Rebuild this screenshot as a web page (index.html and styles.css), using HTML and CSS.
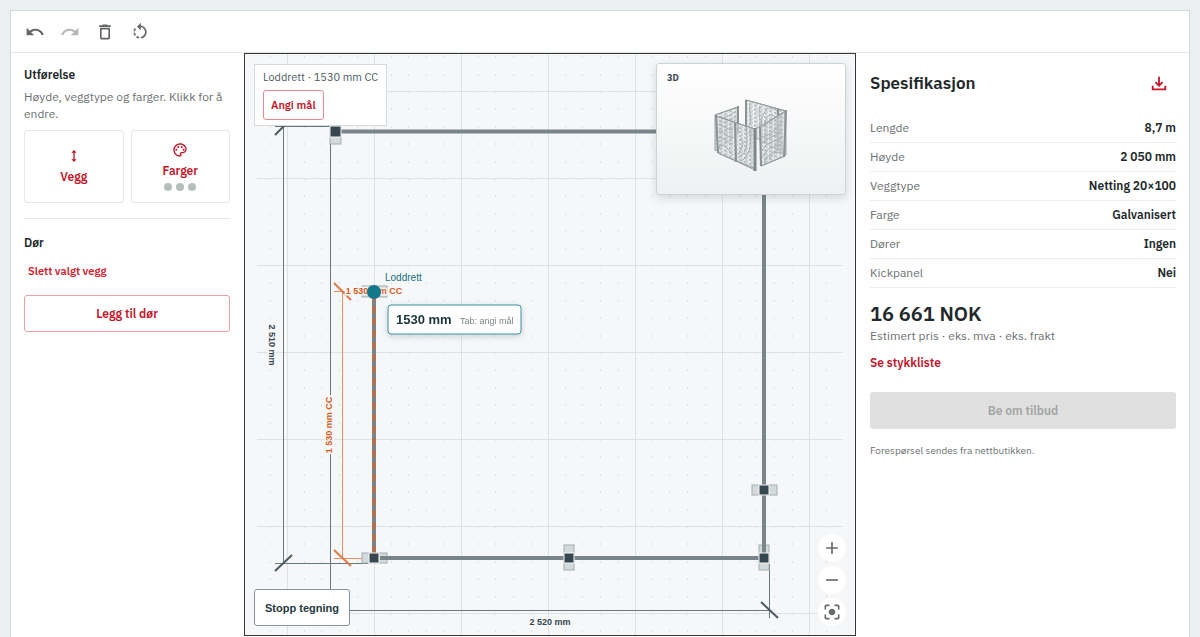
FILE: index.html
```html
<!DOCTYPE html>
<html lang="nb">
<head>
<meta charset="utf-8">
<meta name="viewport" content="width=device-width, initial-scale=1">
<title>Spesifikasjon</title>
<link rel="stylesheet" href="styles.css">
</head>
<body>
<div class="shell">
  <header class="toolbar">
    <button class="tool" type="button" aria-label="Angre"><svg viewBox="0 0 24 24"><path d="M12.500 8c-2.650 0-5.050.99-6.900 2.600L2 7v9h9l-3.620-3.620c1.390-1.160 3.160-1.880 5.120-1.880 3.540 0 6.550 2.310 7.600 5.500l2.370-.78C21.080 11.030 17.150 8 12.500 8z"/></svg></button>
    <button class="tool" type="button" aria-label="Gjenta" disabled><svg viewBox="0 0 24 24"><path d="M18.400 10.600C16.550 8.990 14.150 8 11.500 8c-4.650 0-8.580 3.030-9.960 7.220L3.900 16c1.050-3.190 4.050-5.500 7.600-5.500 1.950 0 3.730.72 5.120 1.880L13 16h9V7l-3.600 3.600z"/></svg></button>
    <button class="tool" type="button" aria-label="Slett"><svg viewBox="0 0 24 24"><path d="M6 19c0 1.100.9 2 2 2h8c1.100 0 2-.9 2-2V7H6v12zM8 9h8v10H8V9zm7.500-5-1-1h-5l-1 1H5v2h14V4h-3.500z"/></svg></button>
    <button class="tool" type="button" aria-label="Nullstill"><svg viewBox="0 0 24 24"><path d="M7.110 8.530 5.700 7.110C4.800 8.270 4.240 9.610 4.070 11h2.020c.14-.87.49-1.720 1.020-2.470zM6.090 13H4.070c.17 1.390.72 2.730 1.620 3.890l1.410-1.420c-.52-.75-.87-1.590-1.010-2.470zm1.010 5.320c1.160.9 2.510 1.440 3.900 1.610V17.900c-.87-.15-1.710-.49-2.460-1.030L7.100 18.320zM13 4.070V1L8.450 5.550 13 10V6.090c2.840.48 5 2.940 5 5.910s-2.160 5.430-5 5.910v2.020c3.950-.49 7-3.850 7-7.930s-3.050-7.440-7-7.930z"/></svg></button>
  </header>
  <main class="workspace">
    <aside class="options">
      <section>
        <h2 class="heading">Utførelse</h2>
        <p class="hint">Høyde, veggtype og farger. Klikk for å endre.</p>
        <div class="tiles">
          <button class="tile" type="button"><svg class="tile-icon" viewBox="0 0 24 24"><path d="M13 6.990h3L12 3 8 6.990h3v10.020H8L12 21l4-3.990h-3z"/></svg><span>Vegg</span></button>
          <button class="tile" type="button"><svg class="tile-icon" viewBox="0 0 24 24"><path d="M12 22C6.490 22 2 17.510 2 12S6.490 2 12 2s10 4.040 10 9c0 3.310-2.690 6-6 6h-1.770c-.28 0-.5.22-.5.500 0 .12.050.23.130.33.410.47.640 1.060.640 1.670 0 1.380-1.120 2.500-2.500 2.500zm0-18c-4.410 0-8 3.590-8 8s3.590 8 8 8c.28 0 .5-.22.500-.5 0-.16-.08-.28-.14-.35-.41-.46-.63-1.050-.63-1.650 0-1.380 1.120-2.500 2.500-2.500H16c2.210 0 4-1.790 4-4 0-3.860-3.590-7-8-7z"/><circle cx="6.500" cy="11.500" r="1.500"/><circle cx="9.500" cy="7.500" r="1.500"/><circle cx="14.500" cy="7.500" r="1.500"/><circle cx="17.500" cy="11.500" r="1.500"/></svg><span>Farger</span><span class="swatches"><i></i><i></i><i></i></span></button>
        </div>
      </section>
      <section class="door">
        <h2 class="heading">Dør</h2>
        <button class="text-button" type="button">Slett valgt vegg</button>
        <button class="outline-button" type="button">Legg til dør</button>
      </section>
    </aside>

    <section class="canvas" aria-label="Plantegning">
      <svg class="drawing" viewBox="245 54 610 581">
        <defs>
          <pattern id="dots" x="374" y="91" width="87" height="87" patternUnits="userSpaceOnUse">
            <path class="dot" d="M17 0h1M34 0h1M52 0h1M70 0h1M0 17h1M17 17h1M34 17h1M52 17h1M70 17h1M0 35h1M17 35h1M34 35h1M52 35h1M70 35h1M0 52h1M17 52h1M34 52h1M52 52h1M70 52h1M0 70h1M17 70h1M34 70h1M52 70h1M70 70h1"/>
          </pattern>
        </defs>
        <rect x="257" y="54" width="586" height="581" fill="url(#dots)"/>
        <path class="grid" d="M287.500 54v581M374.500 54v581M461.500 54v581M548.500 54v581M635.500 54v581M722.500 54v581M809.500 54v581M257 91.500h586M257 178.500h586M257 265.500h586M257 352.500h586M257 439.500h586M257 526.500h586M257 613.500h586"/>
        <path class="measure" d="M283.500 126v437M275 126.500h56M275 563.500h93M330.500 138v472M769.500 564v54M330 610.500h440"/>
        <path class="tick" d="M275 135l16-16M275 571l17-16M761 602l17 16"/>
        <path class="measure-active" d="M342.500 291v267M334 291.500h40M334 558.500h32"/>
        <path class="tick-active" d="M334 283l17 17M334 550l17 16"/>
        <g class="panels">
          <rect x="330" y="119" width="11" height="25"/>
          <rect x="362" y="286" width="25" height="11"/>
          <rect x="362" y="553" width="25" height="10"/>
          <rect x="564" y="545" width="10" height="25"/>
          <rect x="759" y="545" width="10" height="25"/>
          <rect x="752" y="485" width="25" height="10"/>
        </g>
        <path class="wall" d="M341 131.500h423V485M764 495v58M759 558H574M564 558H380M374 553V291"/>
        <path class="wall-active" d="M374 553V291"/>
        <g class="posts">
          <rect x="330" y="126" width="11" height="11"/><rect x="369" y="553" width="10" height="10"/><rect x="564" y="553" width="10" height="10"/><rect x="759" y="553" width="10" height="10"/><rect x="759" y="485" width="10" height="10"/>
        </g>
        <text class="dimension" x="550" y="625">2 520 mm</text>
        <text class="dimension" transform="translate(269 345) rotate(90)">2 510 mm</text>
        <text class="dimension active" transform="translate(332 425) rotate(-90)">1 530 mm CC</text>
        <text class="dimension active" x="374" y="294">1 530 mm CC</text>
        <circle class="cursor" cx="374" cy="292" r="7"/>
        <text class="direction" x="385" y="281">Loddrett</text>
        <g class="measure-tip">
          <rect x="388" y="305" width="133" height="29" rx="3"/>
          <text class="tip-value" x="396" y="324">1530 mm</text>
          <text class="tip-help" x="460" y="324">Tab: angi mål</text>
        </g>
      </svg>
      <div class="selection">
        <span>Loddrett · 1530 mm CC</span>
        <button class="measure-button" type="button">Angi mål</button>
      </div>
      <div class="preview">
        <strong class="preview-label">3D</strong>
        <svg class="model" viewBox="0 0 95 90">
          <defs>
            <pattern id="meshLeft" width="5" height="4" patternUnits="userSpaceOnUse" patternTransform="skewY(20)"><path d="M0 1h3M2 3h2M1 0v2"/></pattern>
            <pattern id="meshRight" width="5" height="4" patternUnits="userSpaceOnUse" patternTransform="skewY(-31)"><path d="M0 1h3M2 3h2M1 0v2"/></pattern>
          </defs>
          <path class="mesh-fill" d="M42 10 82 21v44L42 42zM11 25 34 17v27L11 61z"/>
          <path fill="url(#meshLeft)" d="M42 10 82 21v44L42 42z"/>
          <path fill="url(#meshRight)" d="M11 25 34 17v27L11 61z"/>
          <path class="waves" d="M46 14c-2 10 3 14-1 22M56 16c-3 9 2 14-1 20M57 36c1-15 7-20 13-17s7 7 10 10M60 37c2-12 7-15 12-9M15 27c8 1 12-2 17-6M16 33c5-1 10-3 16-6"/>
          <path class="frame" d="M42 10 82 21M11 25 34 17"/>
          <path class="frame-post" d="M42 10v28M74 19v40M34 16v27"/>
          <path class="mesh-front" d="M12 26 51 39v41L14 63zM56 38 81 21v45L57 76z"/>
          <path fill="url(#meshLeft)" d="M12 26 51 39v41L14 63z"/>
          <path fill="url(#meshRight)" d="M56 38 81 21v45L57 76z"/>
          <path class="waves" d="M14 34c6 1 8 7 15 5M14 41c7-1 8 8 15 6M14 48c4-3 9 6 15 6M15 57c5-6 10 4 14 8M34 68c10-5 10-17 8-31M38 71c10-8 9-20 8-32M36 49c7 0 0 12-2 16M58 47c8-2 13-6 21-16M58 54c4-8 14-6 21-15M58 61c5-12 17-8 21-15M59 67c5-13 16-9 20-15M60 72c7-12 15-12 19-14M65 69c6-9 9-6 14-7"/>
          <path class="frame" d="M12 26 51 39 81 22M14 63l38 16M57 76l24-10"/>
          <path class="frame-post" d="M12 25l2 38M31 33l1 39M82 20l-2 47M56 37l1 39"/>
          <path class="frame-corner" d="M51 38v43"/>
        </svg>
      </div>
      <button class="stop-button" type="button">Stopp tegning</button>
      <div class="zoom-controls">
        <button class="zoom-button" type="button" aria-label="Zoom inn"><svg viewBox="0 0 24 24"><path d="M19 13h-6v6h-2v-6H5v-2h6V5h2v6h6z"/></svg></button>
        <button class="zoom-button" type="button" aria-label="Zoom ut"><svg viewBox="0 0 24 24"><path d="M5 11h14v2H5z"/></svg></button>
        <button class="zoom-button" type="button" aria-label="Sentrer"><svg viewBox="0 0 24 24"><path d="M5 15H3v4c0 1.100.9 2 2 2h4v-2H5v-4zM5 5h4V3H5c-1.100 0-2 .9-2 2v4h2V5zm14-2h-4v2h4v4h2V5c0-1.100-.9-2-2-2zm0 16h-4v2h4c1.100 0 2-.9 2-2v-4h-2v4zM12 8c-2.210 0-4 1.790-4 4s1.790 4 4 4 4-1.790 4-4-1.790-4-4-4z"/></svg></button>
      </div>
    </section>

    <aside class="spec">
      <div class="spec-header">
        <h1 class="spec-title">Spesifikasjon</h1>
        <button class="download" type="button" aria-label="Last ned"><svg viewBox="0 0 20 20"><path d="M10 3v9M6 9l4 4 4-4M3 13v4h14v-4"/></svg></button>
      </div>
      <table class="spec-table">
        <tbody>
          <tr><th scope="row">Lengde</th><td>8,7 m</td></tr>
          <tr><th scope="row">Høyde</th><td>2 050 mm</td></tr>
          <tr><th scope="row">Veggtype</th><td>Netting 20×100</td></tr>
          <tr><th scope="row">Farge</th><td>Galvanisert</td></tr>
          <tr><th scope="row">Dører</th><td>Ingen</td></tr>
          <tr><th scope="row">Kickpanel</th><td>Nei</td></tr>
        </tbody>
      </table>
      <p class="price">16 661 NOK</p>
      <p class="price-note">Estimert pris · eks. mva · eks. frakt</p>
      <a class="parts-link" href="#stykkliste">Se stykkliste</a>
      <button class="quote-button" type="button" disabled>Be om tilbud</button>
      <p class="footnote">Forespørsel sendes fra nettbutikken.</p>
    </aside>
  </main>
</div>
</body>
</html>
```
FILE: styles.css
```css
* { box-sizing: border-box; }
body {
  margin: 0;
  background: #ecf0f1;
  color: #222829;
  font: 12px/17px "IBM Plex Sans", "Noto Sans", sans-serif;
}
h1, h2, p { margin: 0; }
button { padding: 0; border: 0; background: none; color: inherit; font: inherit; }
svg { display: block; }

.shell {
  display: flex;
  flex-direction: column;
  min-height: calc(100vh - 10px);
  margin: 10px 10px 0;
  border: 1px solid #d3d8da;
  border-bottom: 0;
  background: #fff;
}
.toolbar {
  display: flex;
  align-items: center;
  gap: 15px;
  height: 42px;
  padding: 0 14px;
  border-bottom: 1px solid #e3e6e7;
}
.tool { width: 20px; height: 20px; fill: #626667; }
.tool:disabled { fill: #b5b8b9; }
.workspace {
  display: grid;
  grid-template-columns: 233px minmax(0, 1fr) 333px;
  flex: 1;
}

.options { padding: 13px 14px 13px 13px; }
.heading { margin-bottom: 5px; font-size: 12px; line-height: 17px; font-weight: 600; }
.hint { color: #6b7071; }
.tiles { display: grid; grid-template-columns: 1fr 1fr; gap: 7px; margin-top: 8px; }
.tile {
  display: flex;
  flex-direction: column;
  align-items: center;
  justify-content: center;
  gap: 4px;
  height: 73px;
  border: 1px solid #e5e7e8;
  border-radius: 3px;
  color: #c3162a;
  font-weight: 600;
}
.tile-icon { width: 16px; height: 16px; fill: currentColor; }
.swatches { display: flex; gap: 4px; }
.swatches i { width: 8px; height: 8px; border-radius: 50%; background: #b4bebd; }
.door {
  display: flex;
  flex-direction: column;
  align-items: flex-start;
  margin-top: 15px;
  padding-top: 15px;
  border-top: 1px solid #e5e7e8;
}
.text-button { margin: 7px 4px 15px; color: #d3232f; font-size: 11px; font-weight: 600; }
.outline-button {
  width: 100%;
  height: 37px;
  border: 1px solid #eb9fa8;
  border-radius: 3px;
  color: #c3162a;
  font-weight: 600;
}

.canvas {
  position: relative;
  margin-bottom: 1px;
  border: 1px solid #34383a;
  background: #f5f7f9;
}
.drawing { width: 100%; height: 100%; position: absolute; inset: 0; }
.dot { fill: none; stroke: #c3cacd; stroke-width: 1; transform: translateY(1px); }
.grid { fill: none; stroke: #dde3e5; }
.measure { fill: none; stroke: #68787d; }
.tick { fill: none; stroke: #4c5b62; stroke-width: 2; }
.measure-active { fill: none; stroke: #ec8f60; }
.tick-active { fill: none; stroke: #e07a49; stroke-width: 2; }
.panels { fill: #d3dadb; stroke: #a3aeb0; }
.wall { fill: none; stroke: #78868a; stroke-width: 4; }
.wall-active { fill: none; stroke: #e2601c; stroke-width: 2; stroke-dasharray: 7 5; }
.posts { fill: #37474f; stroke: #f5f7f9; }
.dimension {
  fill: #37474f;
  stroke: #f5f7f9;
  stroke-width: 3;
  paint-order: stroke;
  font: bold 9px "Liberation Sans", sans-serif;
  text-anchor: middle;
}
.active { fill: #d95b22; }
.cursor { fill: #12788a; }
.direction { fill: #20707e; font: 10px "Liberation Sans", sans-serif; }
.measure-tip { filter: drop-shadow(0 2px 3px #37474f33); }
.measure-tip rect { fill: #fff; stroke: #3793a1; }
.tip-value { fill: #17343b; font: bold 13px "Liberation Sans", sans-serif; }
.tip-help { fill: #7b8589; font: 9px "Liberation Sans", sans-serif; }

.selection {
  position: absolute;
  top: 10px;
  left: 9px;
  display: flex;
  flex-direction: column;
  align-items: flex-start;
  gap: 4px;
  padding: 4px 8px 5px;
  border: 1px solid #d5dbdd;
  background: #fffffffa;
  color: #4b5a60;
  font-size: 11px;
}
.measure-button {
  height: 30px;
  padding: 0 7px;
  border: 1px solid #e58b94;
  border-radius: 3px;
  color: #c3162a;
  font-weight: 600;
}
.preview {
  position: absolute;
  top: 9px;
  right: 9px;
  width: 190px;
  height: 132px;
  border: 1px solid #cbd4d5;
  border-radius: 3px;
  background: linear-gradient(#fff, #eef0f1);
  box-shadow: 0 3px 8px #37474f2b;
}
.preview-label { position: absolute; top: 5px; left: 10px; color: #37474f; font-size: 9px; }
.model { width: 95px; height: 90px; margin: 26px auto 0; fill: none; stroke: #9fa7a8; }
.model pattern { stroke: #a5adae; }
.mesh-fill { fill: #eef0f0; stroke: none; }
.mesh-front { fill: #dfe3e399; stroke: none; }
.waves { stroke: #a8b0b1; }
.frame { stroke: #929b9c; }
.frame-post { stroke: #8a9394; stroke-width: 2; }
.frame-corner { stroke: #7d8788; stroke-width: 3; }
.stop-button {
  position: absolute;
  bottom: 9px;
  left: 9px;
  height: 37px;
  padding: 0 10px;
  border: 1px solid #87949a;
  border-radius: 3px;
  background: #fff;
  color: #263940;
  font: bold 11px "Liberation Sans", sans-serif;
}
.zoom-controls { position: absolute; right: 9px; bottom: 9px; display: flex; flex-direction: column; gap: 4px; }
.zoom-button {
  display: grid;
  place-items: center;
  width: 28px;
  height: 28px;
  border-radius: 50%;
  background: #fff;
}
.zoom-button svg { width: 20px; height: 20px; fill: #666b6d; }

.spec { padding: 18px 13px 18px 14px; }
.spec-header { display: flex; align-items: center; justify-content: space-between; height: 24px; }
.spec-title { font-size: 17px; line-height: 24px; font-weight: 600; }
.download { padding-right: 8px; }
.download svg { width: 18px; height: 18px; fill: none; stroke: #c3162a; stroke-width: 2; }
.spec-table { width: 100%; margin-top: 18px; border-collapse: collapse; }
.spec-table th, .spec-table td { height: 29px; padding: 0; border-bottom: 1px solid #eceeee; }
.spec-table th { color: #6b7071; font-weight: 400; text-align: left; }
.spec-table td { font-weight: 600; text-align: right; }
.price { margin-top: 12px; font-size: 20px; line-height: 27px; font-weight: 600; }
.price-note { color: #6b7071; }
.parts-link { display: block; margin-top: 10px; color: #c3162a; font-weight: 600; text-decoration: none; }
.quote-button {
  display: block;
  width: 100%;
  height: 37px;
  margin-top: 21px;
  border-radius: 3px;
  background: #e0e0e0;
  color: #a3a5a5;
  font-weight: 600;
}
.footnote { margin-top: 13px; color: #6b7071; font-size: 10px; }
```
